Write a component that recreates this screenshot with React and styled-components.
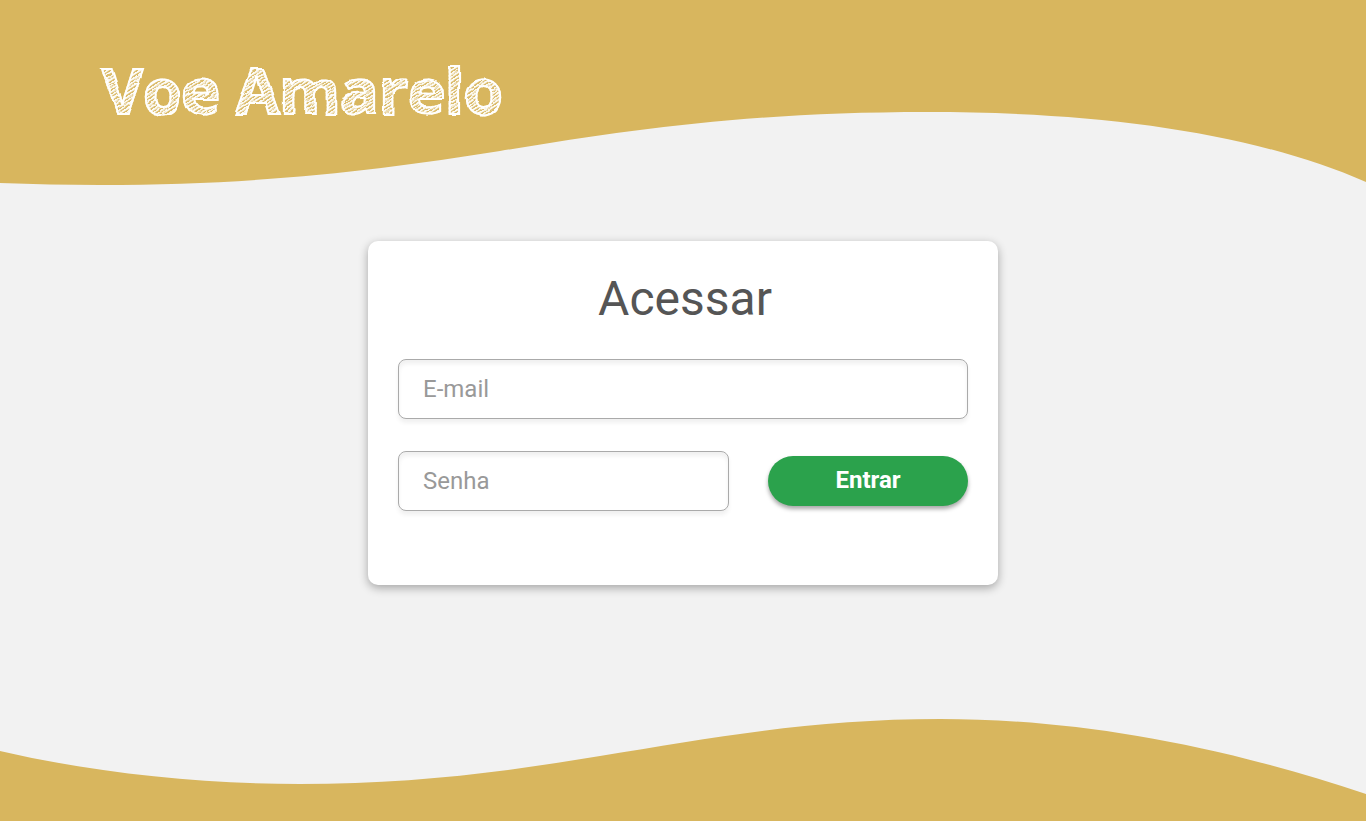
import React from "react";
import styled, { createGlobalStyle } from "styled-components";

const gold = "#d8b65e";

const GlobalStyle = createGlobalStyle`
  *, *::before, *::after { box-sizing: border-box; }
  body {
    margin: 0;
    background: #f2f2f2;
    font-family: Roboto, "Liberation Sans", sans-serif;
  }
`;

const Page = styled.div`
  display: flex;
  flex-direction: column;
  min-height: 100vh;
`;

const Header = styled.header`
  position: relative;
  padding: 48px 102px 53px;
`;

const HeaderWave = styled.svg`
  position: absolute;
  inset: 0;
  z-index: -1;
  width: 100%;
  height: 100%;
  fill: ${gold};
`;

const Brand = styled.h1`
  margin: 0;
  font: 700 63px/84px "Open Sans", "Noto Sans", sans-serif;
  white-space: nowrap;
  color: transparent;
  background:
    repeating-linear-gradient(146deg, rgba(255, 255, 255, 0.9) 0 1px, rgba(255, 255, 255, 0.1) 2px 3px),
    repeating-linear-gradient(158deg, rgba(255, 255, 255, 0.5) 0 1px, transparent 2px 5px);
  background-clip: text;
  -webkit-background-clip: text;
  -webkit-text-stroke: 2px #fff;
  filter: url(#chalk);
`;

const FilterDefs = styled.svg`
  position: absolute;
`;

const Main = styled.main`
  flex: 1;
  display: flex;
  justify-content: center;
  align-items: flex-start;
  padding: 56px 24px;
`;

const Card = styled.form`
  width: 100%;
  max-width: 630px;
  padding: 30px 30px 74px;
  display: flex;
  flex-direction: column;
  gap: 32px;
  background: #fff;
  border-radius: 10px;
  box-shadow: 0 3px 10px rgba(0, 0, 0, 0.32);
`;

const CardTitle = styled.h2`
  margin: 0;
  padding-left: 4px;
  font-size: 48px;
  font-weight: 400;
  line-height: 56px;
  text-align: center;
  color: #555;
`;

const Row = styled.div`
  display: flex;
  align-items: center;
  gap: 39px;
`;

const Field = styled.input`
  flex: 1;
  min-width: 0;
  height: 60px;
  padding: 0 24px;
  font: 400 24px/28px Roboto, "Liberation Sans", sans-serif;
  color: #555;
  background: #fff;
  border: 1px solid #aaa;
  border-radius: 8px;
  box-shadow: 0 4px 4px rgba(0, 0, 0, 0.06), inset 0 4px 4px rgba(0, 0, 0, 0.06);

  &::placeholder { color: #999; opacity: 1; }
`;

const SubmitButton = styled.button`
  width: 200px;
  height: 50px;
  padding: 0 0 2px;
  font: 700 24px/28px Roboto, "Liberation Sans", sans-serif;
  color: #fff;
  background: #2ba24c;
  border: 0;
  border-radius: 25px;
  box-shadow: 0 3px 4px rgba(0, 0, 0, 0.35);
  cursor: pointer;
`;

const FooterWave = styled.svg`
  display: block;
  width: 100%;
  height: 102px;
  fill: ${gold};
`;

export default function App() {
  return (
    <Page>
      <GlobalStyle />
      <Header>
        <HeaderWave viewBox="0 0 1366 185" preserveAspectRatio="none" aria-hidden="true">
          <path d="M0 0H1366V182C1251 132 1100 112 927 112C750 112 630 129.500 500 151C380 170 260 185 100 185C67 185 33 184.300 0 183Z" />
        </HeaderWave>
        <FilterDefs width="0" height="0" aria-hidden="true">
          <filter id="chalk">
            <feTurbulence type="fractalNoise" baseFrequency="0.04" numOctaves="2" seed="4" />
            <feDisplacementMap in="SourceGraphic" scale="5" xChannelSelector="R" yChannelSelector="G" />
          </filter>
        </FilterDefs>
        <Brand>Voe Amarelo</Brand>
      </Header>
      <Main>
        <Card onSubmit={(event) => event.preventDefault()}>
          <CardTitle>Acessar</CardTitle>
          <Row>
            <Field type="email" placeholder="E-mail" aria-label="E-mail" />
          </Row>
          <Row>
            <Field type="password" placeholder="Senha" aria-label="Senha" />
            <SubmitButton type="submit">Entrar</SubmitButton>
          </Row>
        </Card>
      </Main>
      <FooterWave viewBox="0 0 1366 102" preserveAspectRatio="none" aria-hidden="true">
        <path d="M0 32C95 54 200 65 300 65C410 65 505 53 600 37C715 18 815 0 940 0C1070 0 1210 23 1366 75V102H0Z" />
      </FooterWave>
    </Page>
  );
}
